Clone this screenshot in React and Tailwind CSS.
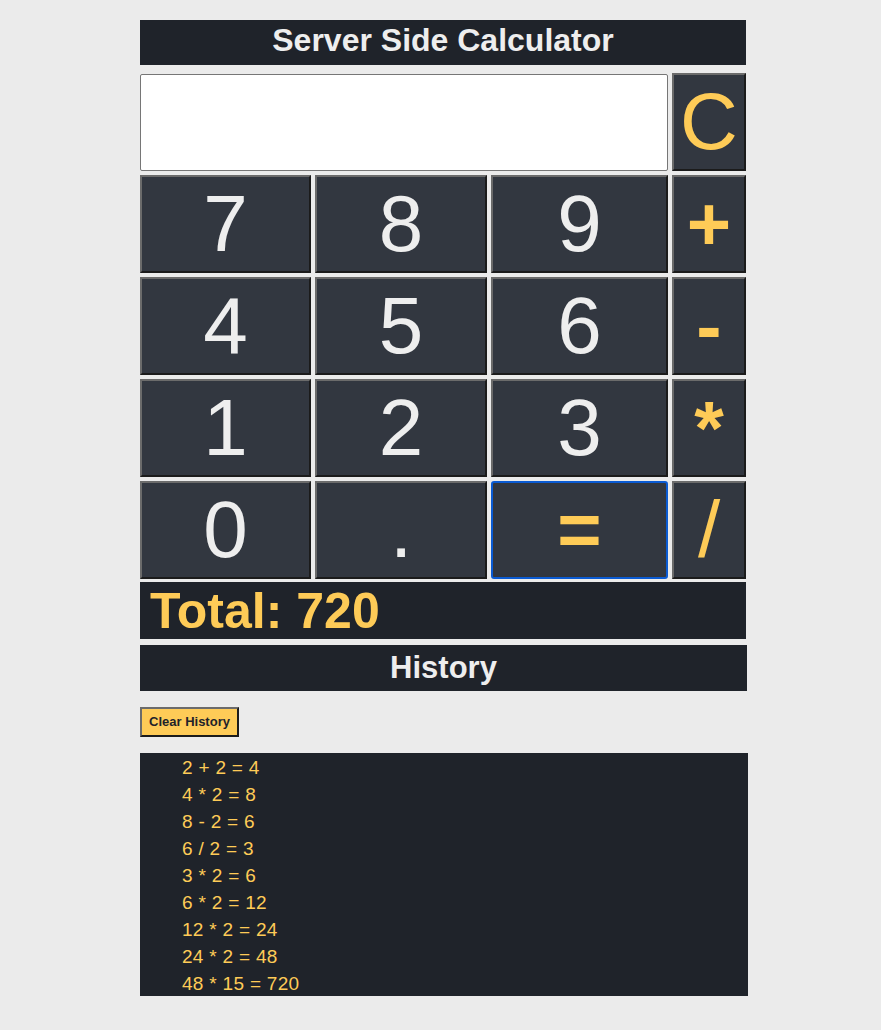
const history = [
  "2 + 2 = 4",
  "4 * 2 = 8",
  "8 - 2 = 6",
  "6 / 2 = 3",
  "3 * 2 = 6",
  "6 * 2 = 12",
  "12 * 2 = 24",
  "24 * 2 = 48",
  "48 * 15 = 720",
];

const rows = [
  ["7", "8", "9", "+"],
  ["4", "5", "6", "-"],
  ["1", "2", "3", "*"],
  ["0", ".", "=", "/"],
];

const Key = ({ label, op, focus }) => (
  <button
    className={
      "h-[98px] flex items-center justify-center bg-[#323740] leading-none " +
      (focus
        ? "border-2 border-[#0b5bd3] rounded-[3px] "
        : "border-2 border-t-[#6b6b6b] border-l-[#6b6b6b] border-b-[#1b1b1b] border-r-[#1b1b1b] ") +
      (op
        ? label === "/"
          ? "text-[#fecb57] text-[80px]"
          : "text-[#fecb57] font-bold text-[76px]"
        : "text-[#eeeeee] text-[80px]")
    }
  >
    {label}
  </button>
);

export default function App() {
  return (
    <div className="min-h-[1030px] bg-[#ebebeb] pt-5 font-['Liberation_Sans',Arial,sans-serif]">
      <div className="w-[606px] ml-[140px]">
        <h1 className="h-[45px] bg-[#1f232a] text-[#eeeeee] text-[32px] font-bold text-center leading-[40px]">
          Server Side Calculator
        </h1>

        <div className="mt-2 grid grid-cols-[171px_172px_177px_74px] gap-x-1 gap-y-1">
          <input
            readOnly
            className="col-span-3 h-[97px] mt-px bg-white border border-[#767676] rounded-[2px]"
          />
          <button className="h-[98px] flex items-center justify-center bg-[#323740] border-2 border-t-[#6b6b6b] border-l-[#6b6b6b] border-b-[#1b1b1b] border-r-[#1b1b1b] text-[#fecb57] text-[80px] leading-none">
            C
          </button>
          {rows.map((row) =>
            row.map((k, i) => (
              <Key
                key={k}
                label={k}
                op={i === 3 || k === "="}
                focus={k === "="}
              />
            ))
          )}
        </div>

        <div className="mt-[3px] h-[57px] bg-[#1f232a] pl-[10px] flex items-center">
          <span className="text-[#fecb57] text-[50px] font-bold leading-none">
            Total: 720
          </span>
        </div>

        <h2 className="mt-[6px] h-[46px] w-[607px] bg-[#1f232a] text-[#eeeeee] text-[31px] font-bold text-center leading-[46px]">
          History
        </h2>

        <button className="mt-4 h-[30px] px-[7px] bg-[#fecb57] border-2 border-t-[#6b6b6b] border-l-[#6b6b6b] border-b-[#1b1b1b] border-r-[#1b1b1b] text-[13px] font-bold text-[#1f232a]">
          Clear History
        </button>

        <ul className="mt-4 w-[608px] h-[243px] bg-[#1f232a] pl-[42px] pt-px">
          {history.map((h) => (
            <li key={h} className="text-[#fecb57] text-[19px] tracking-[0.3px] leading-[27px]">
              {h}
            </li>
          ))}
        </ul>
      </div>
    </div>
  );
}
